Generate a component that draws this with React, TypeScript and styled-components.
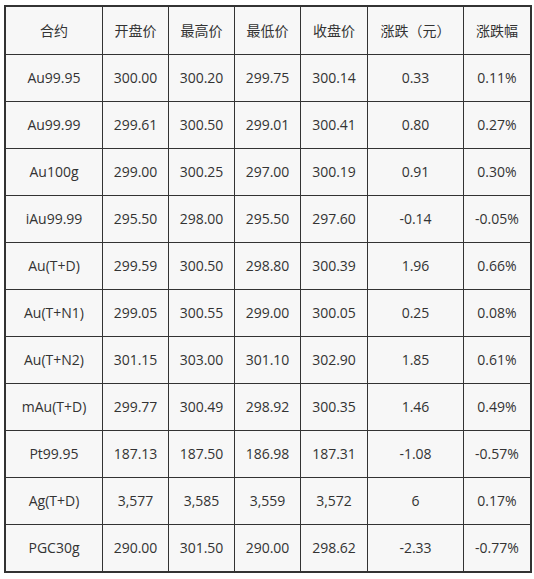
import React from "react";
import styled, { createGlobalStyle } from "styled-components";

const GlobalStyle = createGlobalStyle`
  html, body {
    margin: 0;
    padding: 0;
    background: #ffffff;
  }
  body {
    font-family: "Open Sans", "Noto Sans CJK SC", sans-serif;
  }
`;

const Wrapper = styled.div`
  padding: 5px 0 0 4px;
`;

const Table = styled.table`
  border-collapse: separate;
  border-spacing: 0;
  table-layout: fixed;
  width: 528px;
  border: 2px solid #333333;
  background: #f7f7f7;
  color: #333333;
  font-size: 14px;
`;

const Cell = styled.td<{ $w: number; $last?: boolean; $bottom?: boolean; $h: number }>`
  box-sizing: border-box;
  width: ${(p) => p.$w}px;
  height: ${(p) => p.$h}px;
  padding: 0;
  text-align: center;
  vertical-align: middle;
  border-right: ${(p) => (p.$last ? "none" : "1px solid #333333")};
  border-bottom: ${(p) => (p.$bottom ? "1px solid #333333" : "none")};
  white-space: nowrap;
  font-weight: 400;
  line-height: 20px;
`;

const widths = [97, 66, 66, 66, 67, 96, 66];

const header = ["合约", "开盘价", "最高价", "最低价", "收盘价", "涨跌（元）", "涨跌幅"];

const rows: string[][] = [
  ["Au99.95", "300.00", "300.20", "299.75", "300.14", "0.33", "0.11%"],
  ["Au99.99", "299.61", "300.50", "299.01", "300.41", "0.80", "0.27%"],
  ["Au100g", "299.00", "300.25", "297.00", "300.19", "0.91", "0.30%"],
  ["iAu99.99", "295.50", "298.00", "295.50", "297.60", "-0.14", "-0.05%"],
  ["Au(T+D)", "299.59", "300.50", "298.80", "300.39", "1.96", "0.66%"],
  ["Au(T+N1)", "299.05", "300.55", "299.00", "300.05", "0.25", "0.08%"],
  ["Au(T+N2)", "301.15", "303.00", "301.10", "302.90", "1.85", "0.61%"],
  ["mAu(T+D)", "299.77", "300.49", "298.92", "300.35", "1.46", "0.49%"],
  ["Pt99.95", "187.13", "187.50", "186.98", "187.31", "-1.08", "-0.57%"],
  ["Ag(T+D)", "3,577", "3,585", "3,559", "3,572", "6", "0.17%"],
  ["PGC30g", "290.00", "301.50", "290.00", "298.62", "-2.33", "-0.77%"],
];

export default function App() {
  return (
    <>
      <GlobalStyle />
      <Wrapper>
        <Table>
          <thead>
            <tr>
              {header.map((h, i) => (
                <Cell as="th" key={h} $w={widths[i]} $h={48} $last={i === 6} $bottom>
                  {h}
                </Cell>
              ))}
            </tr>
          </thead>
          <tbody>
            {rows.map((r, ri) => (
              <tr key={r[0]}>
                {r.map((v, i) => (
                  <Cell
                    key={i}
                    $w={widths[i]}
                    $h={ri === rows.length - 1 ? 46 : 47}
                    $last={i === 6}
                    $bottom={ri !== rows.length - 1}
                  >
                    {v}
                  </Cell>
                ))}
              </tr>
            ))}
          </tbody>
        </Table>
      </Wrapper>
    </>
  );
}
